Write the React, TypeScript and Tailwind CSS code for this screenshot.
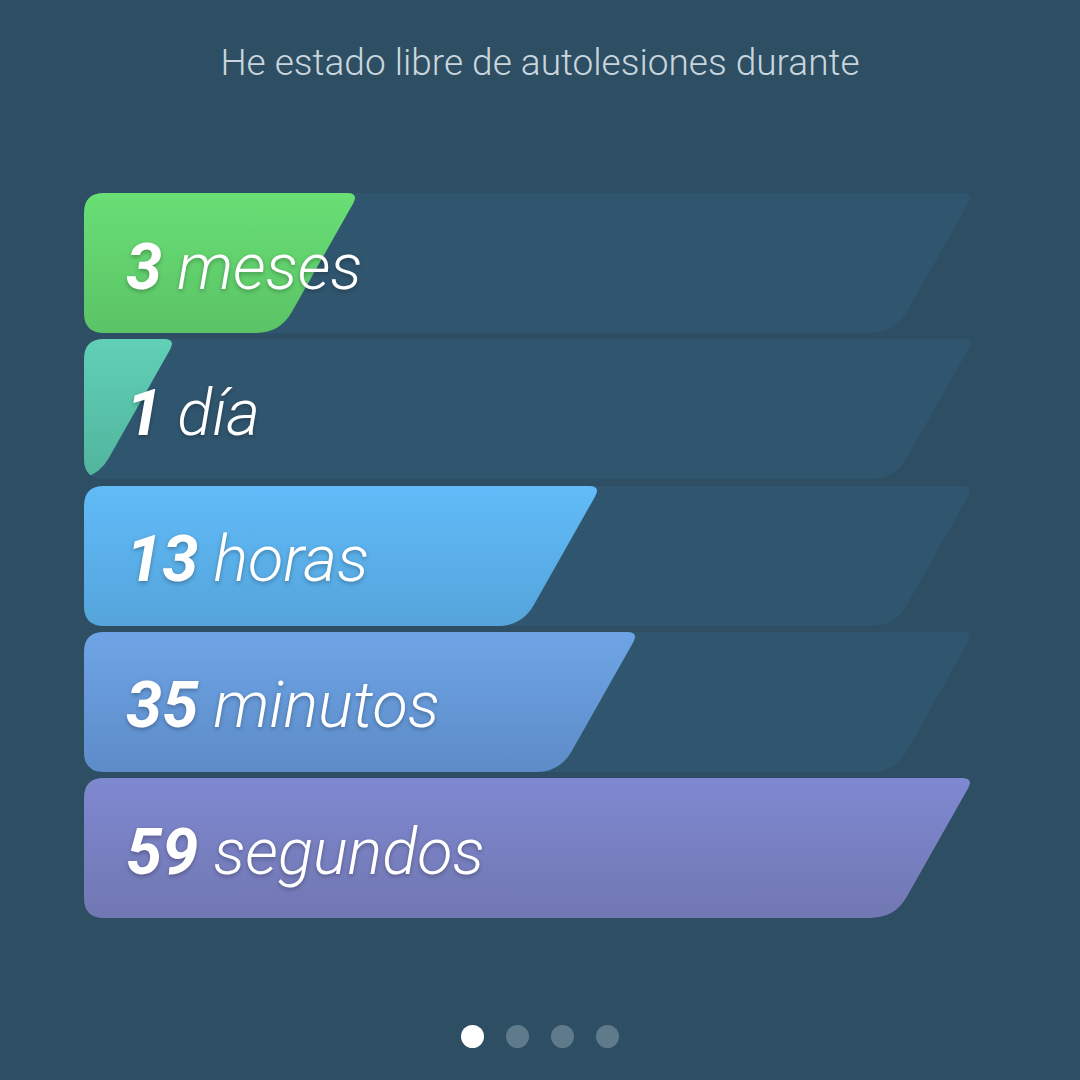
import { useId } from 'react';

const bars = [
  { value: "3", unit: "meses", fill: 275, from: "#69df75", to: "#5bc366" },
  { value: "1", unit: "día", fill: 92, from: "#60d0b6", to: "#51b49d" },
  { value: "13", unit: "horas", fill: 517, from: "#60bbf8", to: "#55a4db" },
  { value: "35", unit: "minutos", fill: 555, from: "#6ea4e6", to: "#5d8cc8" },
  { value: "59", unit: "segundos", fill: 890, from: "#7f89d1", to: "#7177b2" }
];

const H = 140;
const SLANT = 79;
const TRACK = 890;

// slanted right edge, rounded corners; left edge vertical
function shape(w: number, left: number, r: number) {
  const ct = 12;
  const cb = 24;
  const ux = -SLANT / Math.hypot(SLANT, H);
  const uy = H / Math.hypot(SLANT, H);
  const bx = w - SLANT;
  const leftTop = r > 0 ? `M ${left} ${r} Q ${left} 0 ${left + r} 0` : `M ${left} 0`;
  const leftBottom = r > 0 ? `L ${left + r} ${H} Q ${left} ${H} ${left} ${H - r}` : `L ${left} ${H}`;
  return [
    leftTop,
    `L ${w - ct} 0`,
    `Q ${w} 0 ${w + ct * ux} ${ct * uy}`,
    `L ${bx - cb * ux} ${H - cb * uy}`,
    `Q ${bx} ${H} ${bx - cb} ${H}`,
    leftBottom,
    "Z"
  ].join(" ");
}

function Bar({ value, unit, fill, from, to }: typeof bars[number]) {
  const id = useId().replace(/:/g, "");
  const track = shape(TRACK, 0, 20);
  return (
    <div className="relative h-[140px] w-[900px]">
      <svg className="absolute inset-0" width="900" height="140" viewBox="0 0 900 140">
        <defs>
          <clipPath id={`clip${id}`}>
            <path d={track} />
          </clipPath>
          <linearGradient id={`grad${id}`} x1="0" y1="0" x2="0" y2="1">
            <stop offset="0" stopColor={from} />
            <stop offset="1" stopColor={to} />
          </linearGradient>
        </defs>
        <path d={track} fill="#30566f" />
        <g clipPath={`url(#clip${id})`}>
          <path d={shape(fill, -200, 0)} fill={`url(#grad${id})`} />
        </g>
      </svg>
      <div className="relative flex h-full items-center pl-[42px] pt-[8px] text-[65px] italic leading-none text-white [text-shadow:0_2px_4px_rgba(0,0,0,0.28)]">
        <span className="font-bold">{value}</span>
        <span className="ml-[15px] font-light">{unit}</span>
      </div>
    </div>
  );
}

export default function App() {
  return (
    <div className="flex h-[1080px] w-[1080px] flex-col items-center bg-[#2e4e63] font-['Roboto','Liberation_Sans',sans-serif]">
      <h1 className="mt-[41px] text-[37px] font-light leading-[44px] text-[#c9d6de]">
        He estado libre de autolesiones durante
      </h1>

      <div className="mt-[108px] flex w-full flex-col gap-[6.25px] pl-[84px]">
        {bars.map((bar) => (
          <Bar key={bar.unit} {...bar} />
        ))}
      </div>

      <div className="mt-auto mb-[32px] flex gap-[22px]">
        <span className="h-[23px] w-[23px] rounded-full bg-white" />
        <span className="h-[23px] w-[23px] rounded-full bg-[#5f7a8b]" />
        <span className="h-[23px] w-[23px] rounded-full bg-[#5f7a8b]" />
        <span className="h-[23px] w-[23px] rounded-full bg-[#5f7a8b]" />
      </div>
    </div>
  );
}
